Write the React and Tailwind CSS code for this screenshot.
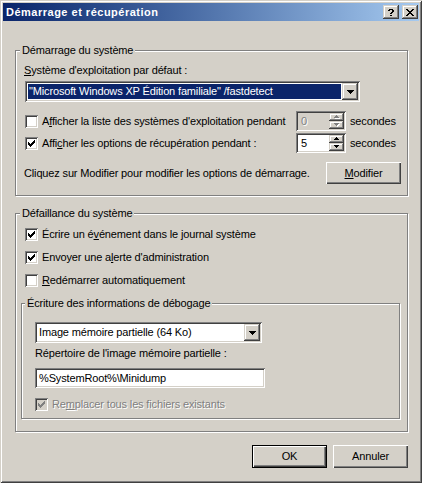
import React from "react";

const sunken =
  "shadow-[inset_1px_1px_0_#808080,inset_-1px_-1px_0_#fff,inset_2px_2px_0_#404040,inset_-2px_-2px_0_#d4d0c8]";
const raised =
  "shadow-[inset_-1px_-1px_0_#404040,inset_1px_1px_0_#d4d0c8,inset_-2px_-2px_0_#808080,inset_2px_2px_0_#fff]";
const pushBtn =
  "shadow-[inset_1px_1px_0_#fff,inset_-1px_-1px_0_#404040,inset_-2px_-2px_0_#808080]";
const defaultBtn =
  "shadow-[inset_0_0_0_1px_#000,inset_2px_2px_0_#fff,inset_-2px_-2px_0_#404040,inset_-3px_-3px_0_#808080]";
const grayText = "text-[#808080] [text-shadow:1px_1px_0_#fff]";

function CheckMark({ color }) {
  return (
    <svg width="7" height="7" viewBox="0 0 7 7" shapeRendering="crispEdges">
      <path
        d="M0 2h1v3H0zM1 3h1v3H1zM2 4h1v3H2zM3 3h1v3H3zM4 2h1v3H4zM5 1h1v3H5zM6 0h1v3H6z"
        fill={color}
      />
    </svg>
  );
}

function Checkbox({ checked, disabled }) {
  return (
    <span
      className={`w-[13px] h-[13px] shrink-0 flex items-center justify-center ${sunken} ${
        disabled ? "bg-[#d4d0c8]" : "bg-white"
      }`}
    >
      {checked && <CheckMark color={disabled ? "#808080" : "#000"} />}
    </span>
  );
}

function DropArrow() {
  return (
    <svg width="7" height="4" viewBox="0 0 7 4" shapeRendering="crispEdges">
      <path d="M0 0h7v1H0zM1 1h5v1H1zM2 2h3v1H2zM3 3h1v1H3z" fill="#000" />
    </svg>
  );
}

function SpinArrow({ up, disabled }) {
  const d = up ? "M2 0h1v1H2zM1 1h3v1H1zM0 2h5v1H0z" : "M0 0h5v1H0zM1 1h3v1H1zM2 2h1v1H2z";
  return (
    <svg width="6" height="4" viewBox="0 0 6 4" shapeRendering="crispEdges">
      {disabled && <path d={d} fill="#fff" transform="translate(1 1)" />}
      <path d={d} fill={disabled ? "#808080" : "#000"} />
    </svg>
  );
}

function Combo({ className, text, selected }) {
  return (
    <div className={`h-[21px] p-[2px] flex bg-white ${sunken} ${className}`}>
      <div className="flex-1 p-[1px] flex min-w-0">
        <span
          className={`flex-1 pl-[1px] leading-[15px] whitespace-nowrap overflow-hidden ${
            selected ? "bg-[#0a246a] text-white" : ""
          }`}
        >
          {text}
        </span>
      </div>
      <div className={`w-[16px] h-[17px] flex items-center justify-center bg-[#d4d0c8] ${raised}`}>
        <DropArrow />
      </div>
    </div>
  );
}

function Spinner({ value, disabled }) {
  return (
    <div
      className={`w-[50px] h-[20px] p-[2px] flex ${sunken} ${disabled ? "bg-[#d4d0c8]" : "bg-white"}`}
    >
      <span className={`flex-1 pl-[3px] leading-[16px] ${disabled ? grayText : ""}`}>{value}</span>
      <div className="w-[15px] flex flex-col">
        <div className={`h-[8px] flex items-center justify-center bg-[#d4d0c8] ${raised}`}>
          <SpinArrow up disabled={disabled} />
        </div>
        <div className={`h-[8px] flex items-center justify-center bg-[#d4d0c8] ${raised}`}>
          <SpinArrow disabled={disabled} />
        </div>
      </div>
    </div>
  );
}

function PushButton({ children, isDefault, className }) {
  return (
    <div
      className={`w-[75px] flex items-center justify-center bg-[#d4d0c8] ${
        isDefault ? defaultBtn : pushBtn
      } ${className}`}
    >
      {children}
    </div>
  );
}

function Group({ label, labelLeft, className, children }) {
  return (
    <div
      className={`relative border border-[#808080] shadow-[1px_1px_0_#fff,inset_1px_1px_0_#fff] ${className}`}
    >
      <span className={`absolute -top-[7px] ${labelLeft} bg-[#d4d0c8] px-[2px] whitespace-nowrap`}>
        {label}
      </span>
      {children}
    </div>
  );
}

function CheckRow({ checked, disabled, children, className }) {
  return (
    <div className={`h-[17px] flex items-center gap-[4px] ${className}`}>
      <Checkbox checked={checked} disabled={disabled} />
      <span className={`whitespace-nowrap ${disabled ? grayText : ""}`}>{children}</span>
    </div>
  );
}

function TitleBar() {
  return (
    <div className="h-[18px] flex items-center pl-[3px] pr-[1px] bg-linear-to-r from-[#0a246a] to-[#a6caf0]">
      <span className="flex-1 text-white font-bold tracking-[0.5px] leading-[13px]">
        Démarrage et récupération
      </span>
      <div className={`w-[16px] h-[14px] flex items-center justify-center bg-[#d4d0c8] ${raised}`}>
        <svg width="6" height="7" viewBox="0 0 6 7" shapeRendering="crispEdges">
          <path d="M1 0h4v1H1zM0 1h2v1H0zM4 1h2v2H4zM3 3h2v1H3zM2 4h2v1H2zM2 6h2v1H2z" fill="#000" />
        </svg>
      </div>
      <div className={`ml-[3px] w-[16px] h-[14px] flex items-center justify-center bg-[#d4d0c8] ${raised}`}>
        <svg width="8" height="7" viewBox="0 0 8 7" shapeRendering="crispEdges">
          <path
            d="M0 0h2v1H0zM6 0h2v1H6zM1 1h2v1H1zM5 1h2v1H5zM2 2h4v1H2zM3 3h2v1H3zM2 4h4v1H2zM1 5h2v1H1zM5 5h2v1H5zM0 6h2v1H0zM6 6h2v1H6z"
            fill="#000"
          />
        </svg>
      </div>
    </div>
  );
}

export default function App() {
  return (
    <div
      className={`w-[422px] h-[483px] p-[3px] bg-[#d4d0c8] text-black text-[11px] leading-[13px] tracking-[-0.15px] font-['Liberation_Sans',Arial,sans-serif] shadow-[inset_1px_1px_0_#d4d0c8,inset_-1px_-1px_0_#404040,inset_2px_2px_0_#fff,inset_-2px_-2px_0_#808080]`}
    >
      <TitleBar />
      <div className="pl-[12px] pt-[29px] flex flex-col">
        <Group label="Démarrage du système" labelLeft="left-[4px]" className="w-[393px] h-[146px]">
          <div className="flex flex-col pl-[8px] pr-[6px]">
            <span className="mt-[13px]">
              <u>S</u>ystème d'exploitation par défaut :
            </span>
            <Combo
              className="mt-[4px] ml-[1px] w-[335px]"
              selected
              text={'"Microsoft Windows XP Édition familiale" /fastdetect'}
            />
            <div className="mt-[9px] ml-[1px] h-[20px] flex items-center">
              <Checkbox />
              <span className="ml-[4px] w-[254px] whitespace-nowrap">
                A<u>f</u>ficher la liste des systèmes d'exploitation pendant
              </span>
              <Spinner value="0" disabled />
              <span className="ml-[4px]">secondes</span>
            </div>
            <div className="mt-[2px] ml-[1px] h-[20px] flex items-center">
              <Checkbox checked />
              <span className="ml-[4px] w-[254px] whitespace-nowrap">
                Affi<u>c</u>her les options de récupération pendant :
              </span>
              <Spinner value="5" />
              <span className="ml-[4px]">secondes</span>
            </div>
            <div className="mt-[9px] h-[22px] flex items-center justify-between">
              <span>Cliquez sur Modifier pour modifier les options de démarrage.</span>
              <PushButton className="h-[22px]">
                <u>M</u>odifier
              </PushButton>
            </div>
          </div>
        </Group>

        <Group
          label="Défaillance du système"
          labelLeft="left-[4px]"
          className="mt-[17px] w-[393px] h-[219px]"
        >
          <div className="flex flex-col pl-[9px]">
            <CheckRow checked className="mt-[12px]">
              Écrire un é<u>v</u>énement dans le journal système
            </CheckRow>
            <CheckRow checked className="mt-[6px]">
              Envoyer une a<u>l</u>erte d'administration
            </CheckRow>
            <CheckRow className="mt-[6px]">
              <u>R</u>edémarrer automatiquement
            </CheckRow>
          </div>
          <Group
            label="Écriture des informations de débogage"
            labelLeft="left-[3px]"
            className="mt-[14px] ml-[5px] w-[379px] h-[116px]"
          >
            <div className="flex flex-col pl-[13px]">
              <Combo className="mt-[18px] w-[227px]" text="Image mémoire partielle (64 Ko)" />
              <span className="mt-[4px]">Répertoire de l'image mémoire partielle :</span>
              <div className={`mt-[8px] w-[230px] h-[20px] pl-[4px] bg-white leading-[20px] ${sunken}`}>
                %SystemRoot%\Minidump
              </div>
              <CheckRow checked disabled className="mt-[8px]">
                Re<u>m</u>placer tous les fichiers existants
              </CheckRow>
            </div>
          </Group>
        </Group>

        <div className="mt-[13px] pl-[237px] flex gap-[6px]">
          <PushButton isDefault className="h-[23px]">
            OK
          </PushButton>
          <PushButton className="h-[23px]">Annuler</PushButton>
        </div>
      </div>
    </div>
  );
}
